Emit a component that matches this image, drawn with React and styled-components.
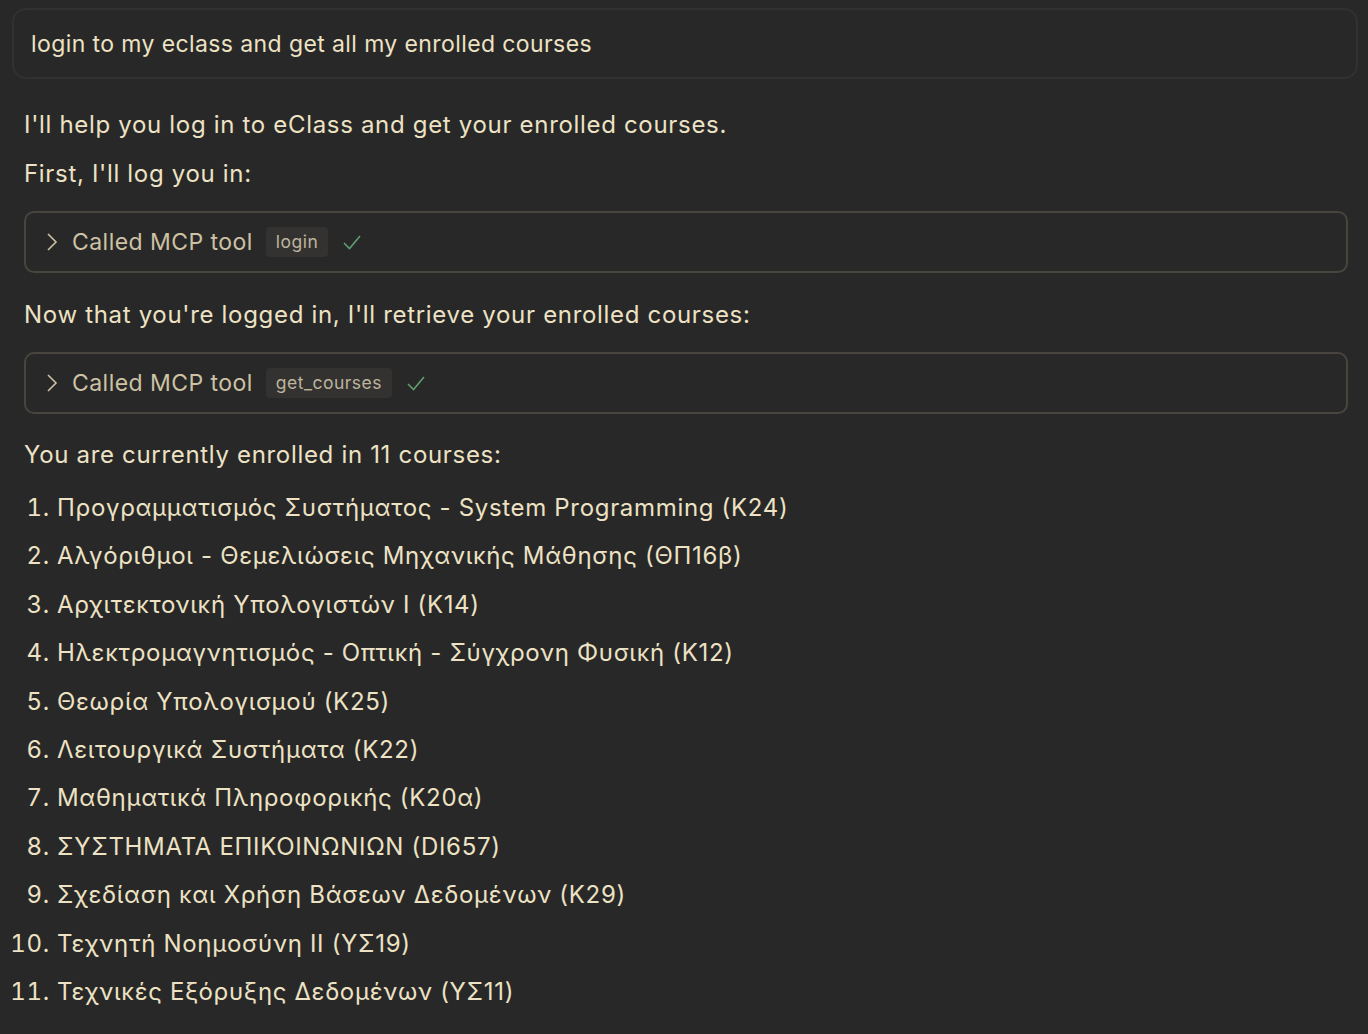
import styled, { createGlobalStyle } from "styled-components";

const GlobalStyle = createGlobalStyle`
  html, body {
    margin: 0;
    padding: 0;
    background: #282828;
  }
  body {
    font-family: Inter, "Noto Sans", "Liberation Sans", sans-serif;
    color: #ede2c4;
  }
`;

const Page = styled.div`
  min-height: 1034px;
  padding: 8px 10px 0 12px;
  box-sizing: border-box;
`;

const Prompt = styled.div`
  height: 71px;
  box-sizing: border-box;
  border: 2px solid #313131;
  border-radius: 14px;
  background: #282828;
  display: flex;
  align-items: center;
  padding: 0 17px 0 17px;
  font-size: 23px;
  letter-spacing: 0.4px;
  color: #ede2c4;
`;

const Reply = styled.div`
  padding: 22px 10px 0 12px;
`;

const Para = styled.p`
  margin: ${(p) => p.$mt || 0}px 0 0;
  font-size: 24px;
  letter-spacing: 0.68px;
  line-height: 48px;
  height: 48px;
  white-space: nowrap;
`;

const ToolBox = styled.div`
  margin-top: 13px;
  height: 62px;
  box-sizing: border-box;
  border: 2px solid #48453e;
  border-radius: 10px;
  display: flex;
  align-items: center;
  padding: 0 0 0 19px;
  color: #cdc2a4;
  font-size: 23px;
  letter-spacing: 0.45px;
`;

const Chevron = styled.svg`
  width: 14px;
  height: 20px;
  margin-right: 13px;
`;

const ToolLabel = styled.span`
  margin-right: 13px;
`;

const Badge = styled.code`
  font-family: Inter, "Noto Sans", "Liberation Sans", sans-serif;
  font-size: 17.5px;
  letter-spacing: 0.5px;
  color: #bdb49c;
  background: #333231;
  border-radius: 4px;
  padding: 4px 10px 5px;
  margin-right: 14px;
`;

const Check = styled.svg`
  width: 20px;
  height: 20px;
`;

const CourseList = styled.ol`
  margin: 5px 0 0;
  padding: 0 0 0 33px;
  font-size: 24px;
  letter-spacing: 0.68px;
  line-height: 48.4px;
  li::marker {
    color: #ede2c4;
  }
`;

const Course = styled.li`
  white-space: nowrap;
`;

const courses = [
  "Προγραμματισμός Συστήματος - System Programming (Κ24)",
  "Αλγόριθμοι - Θεμελιώσεις Μηχανικής Μάθησης (ΘΠ16β)",
  "Αρχιτεκτονική Υπολογιστών Ι (Κ14)",
  "Ηλεκτρομαγνητισμός - Οπτική - Σύγχρονη Φυσική (Κ12)",
  "Θεωρία Υπολογισμού (Κ25)",
  "Λειτουργικά Συστήματα (Κ22)",
  "Μαθηματικά Πληροφορικής (Κ20α)",
  "ΣΥΣΤΗΜΑΤΑ ΕΠΙΚΟΙΝΩΝΙΩΝ (DI657)",
  "Σχεδίαση και Χρήση Βάσεων Δεδομένων (Κ29)",
  "Τεχνητή Νοημοσύνη ΙΙ (ΥΣ19)",
  "Τεχνικές Εξόρυξης Δεδομένων (ΥΣ11)",
];

const ToolCall = ({ name }) => (
  <ToolBox>
    <Chevron viewBox="0 0 14 20">
      <path d="M3 2 L11 10 L3 18" fill="none" stroke="#cdc2a4" strokeWidth="1.6" />
    </Chevron>
    <ToolLabel>Called MCP tool</ToolLabel>
    <Badge>{name}</Badge>
    <Check viewBox="0 0 20 20">
      <path d="M2 11 L7.5 16.5 L18 4" fill="none" stroke="#5f9d70" strokeWidth="1.6" />
    </Check>
  </ToolBox>
);

export default function App() {
  return (
    <>
      <GlobalStyle />
      <Page>
        <Prompt>login to my eclass and get all my enrolled courses</Prompt>
        <Reply>
          <Para>I'll help you log in to eClass and get your enrolled courses.</Para>
          <Para $mt={1}>First, I'll log you in:</Para>
          <ToolCall name="login" />
          <Para $mt={18}>Now that you're logged in, I'll retrieve your enrolled courses:</Para>
          <ToolCall name="get_courses" />
          <Para $mt={17}>You are currently enrolled in 11 courses:</Para>
          <CourseList>
            {courses.map((c) => (
              <Course key={c}>{c}</Course>
            ))}
          </CourseList>
        </Reply>
      </Page>
    </>
  );
}
